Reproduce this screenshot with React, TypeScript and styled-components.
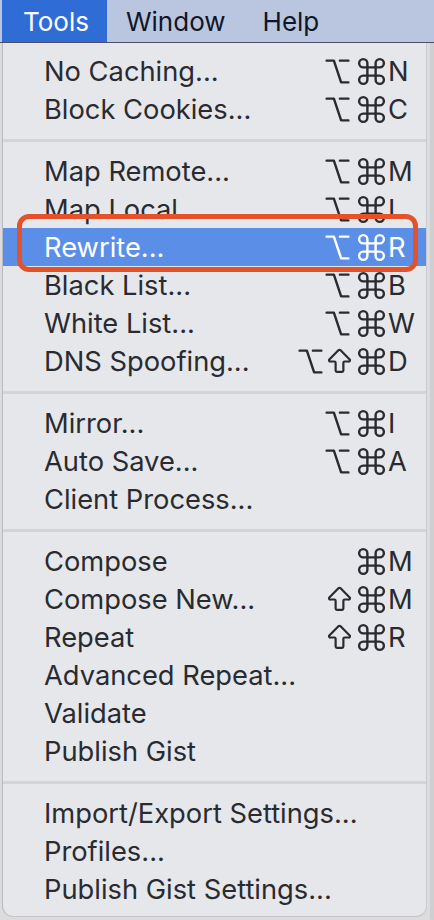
import React from "react";
import styled, { createGlobalStyle } from "styled-components";
import { Command, Option, ArrowBigUp } from "lucide-react";

const Global = createGlobalStyle`
  html, body { margin: 0; padding: 0; }
  body {
    background: #dcdcde;
    font-family: Inter, "Noto Sans", "DejaVu Sans", sans-serif;
    -webkit-font-smoothing: antialiased;
  }
`;

const Screen = styled.div`
  width: 434px;
  height: 920px;
  overflow: hidden;
  display: flex;
  flex-direction: column;
  background: linear-gradient(90deg, #dcdcde 0, #dcdcde 430px, #cfcfd2 430px);
`;

const MenuBar = styled.div`
  height: 42px;
  display: flex;
  align-items: stretch;
  background: #bac6e0;
  border-bottom: 1px solid #4a5068;
`;

const BarItem = styled.div<{ $active?: boolean }>`
  display: flex;
  align-items: center;
  padding: 0 18px 0 ${(p) => (p.$active ? "21px" : "19px")};
  font-size: 26px;
  color: ${(p) => (p.$active ? "#ffffff" : "#101626")};
  background: ${(p) => (p.$active ? "#2f6cd6" : "transparent")};
  margin-left: ${(p) => (p.$active ? "2px" : "0")};
`;

const Panel = styled.div`
  width: 425px;
  margin-left: 2px;
  padding: 9px 0 8px;
  background: #e5e7eb;
  border-left: 1px solid #b9bbc0;
  border-right: 1px solid #c9cbd0;
  border-bottom: 1px solid #c4c6cb;
  border-radius: 0 0 11px 11px;
  display: flex;
  flex-direction: column;
  box-sizing: border-box;
`;

const Row = styled.div<{ $selected?: boolean }>`
  position: relative;
  height: 38px;
  display: flex;
  align-items: center;
  justify-content: space-between;
  padding: 0 0 0 41px;
  font-size: 27.3px;
  color: ${(p) => (p.$selected ? "#ffffff" : "#2a2b30")};
  background: ${(p) => (p.$selected ? "#5b8fe7" : "transparent")};
`;

const Label = styled.span`
  white-space: nowrap;
`;

const Shortcut = styled.span`
  display: flex;
  align-items: center;
`;

const Mod = styled.span<{ $w: number; $mr: number }>`
  width: ${(p) => p.$w}px;
  margin-right: ${(p) => p.$mr}px;
  height: 34px;
  display: flex;
  align-items: center;
  justify-content: center;
  flex: none;
  & > svg {
    flex: none;
  }
`;

const Key = styled.span`
  width: 38px;
  text-align: left;
  font-size: 27.3px;
`;

const Separator = styled.div`
  height: 24px;
  display: flex;
  align-items: center;
  &::after {
    content: "";
    display: block;
    width: 100%;
    height: 3px;
    background: #d2d4d8;
  }
`;

const Callout = styled.div`
  position: absolute;
  left: 14px;
  right: 8px;
  top: -14px;
  bottom: -6px;
  border: 5px solid #e4522c;
  border-radius: 12px;
  pointer-events: none;
`;

type ModKind = "opt" | "shift" | "cmd";
type Item = { label: string; mods?: ModKind[]; key?: string; selected?: boolean };

const renderMod = (m: ModKind) => {
  if (m === "cmd")
    return (
      <Mod $w={32} $mr={1}>
        <Command size={33} strokeWidth={1.75} />
      </Mod>
    );
  if (m === "opt")
    return (
      <Mod $w={28} $mr={4}>
        <Option size={29} strokeWidth={2} />
      </Mod>
    );
  return (
    <Mod $w={23} $mr={4}>
      <ArrowBigUp size={31} strokeWidth={1.7} />
    </Mod>
  );
};

const groups: Item[][] = [
  [
    { label: "No Caching...", mods: ["opt", "cmd"], key: "N" },
    { label: "Block Cookies...", mods: ["opt", "cmd"], key: "C" },
  ],
  [
    { label: "Map Remote...", mods: ["opt", "cmd"], key: "M" },
    { label: "Map Local...", mods: ["opt", "cmd"], key: "L" },
    { label: "Rewrite...", mods: ["opt", "cmd"], key: "R", selected: true },
    { label: "Black List...", mods: ["opt", "cmd"], key: "B" },
    { label: "White List...", mods: ["opt", "cmd"], key: "W" },
    { label: "DNS Spoofing...", mods: ["opt", "shift", "cmd"], key: "D" },
  ],
  [
    { label: "Mirror...", mods: ["opt", "cmd"], key: "I" },
    { label: "Auto Save...", mods: ["opt", "cmd"], key: "A" },
    { label: "Client Process..." },
  ],
  [
    { label: "Compose", mods: ["cmd"], key: "M" },
    { label: "Compose New...", mods: ["shift", "cmd"], key: "M" },
    { label: "Repeat", mods: ["shift", "cmd"], key: "R" },
    { label: "Advanced Repeat..." },
    { label: "Validate" },
    { label: "Publish Gist" },
  ],
  [
    { label: "Import/Export Settings..." },
    { label: "Profiles..." },
    { label: "Publish Gist Settings..." },
  ],
];

export default function App() {
  return (
    <>
      <Global />
      <Screen>
        <MenuBar>
          <BarItem $active>Tools</BarItem>
          <BarItem>Window</BarItem>
          <BarItem>Help</BarItem>
        </MenuBar>
        <Panel>
          {groups.map((g, gi) => (
            <React.Fragment key={gi}>
              {gi > 0 && <Separator />}
              {g.map((it) => (
                <Row key={it.label} $selected={it.selected}>
                  <Label>{it.label}</Label>
                  {it.key && (
                    <Shortcut>
                      {it.mods?.map((m, i) => (
                        <React.Fragment key={i}>{renderMod(m)}</React.Fragment>
                      ))}
                      <Key>{it.key}</Key>
                    </Shortcut>
                  )}
                  {it.selected && <Callout />}
                </Row>
              ))}
            </React.Fragment>
          ))}
        </Panel>
      </Screen>
    </>
  );
}
